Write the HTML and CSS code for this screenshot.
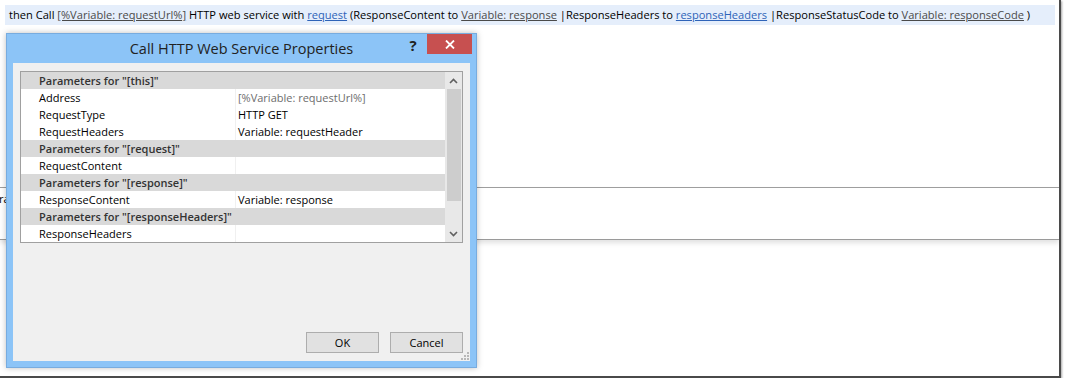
FILE: index.html
```html
<!DOCTYPE html>
<html lang="en">
<head>
    <meta charset="UTF-8">
    <title>Call HTTP Web Service Properties</title>
    <link rel="stylesheet" href="styles.css">
</head>
<body>

<div class="shot">
    <div class="editor">
        <div class="rule">then Call <a class="var">[%Variable: requestUrl%]</a> HTTP web service with <a class="lnk">request</a> (ResponseContent to <a class="var">Variable: response</a> |ResponseHeaders to <a class="lnk">responseHeaders</a> |ResponseStatusCode to <a class="var">Variable: responseCode</a> )</div>
        <div class="upper"></div>
        <div class="lower"><span class="cut">ra</span></div>
    </div>

    <div class="dialog">
        <div class="titlebar">
            <span class="title">Call HTTP Web Service Properties</span>
            <span class="help">?</span>
            <span class="close">
                <svg width="10" height="9" viewBox="0 0 10 9"><path d="M1 0.5 L9 8.5 M9 0.5 L1 8.5" stroke="#fff" stroke-width="1.8"/></svg>
            </span>
        </div>

        <div class="client">
            <div class="grid">
                <div class="rows">
                    <div class="cat">Parameters for "[this]"</div>
                    <div class="prop"><span class="name">Address</span><span class="val dim">[%Variable: requestUrl%]</span></div>
                    <div class="prop"><span class="name">RequestType</span><span class="val">HTTP GET</span></div>
                    <div class="prop"><span class="name">RequestHeaders</span><span class="val">Variable: requestHeader</span></div>
                    <div class="cat">Parameters for "[request]"</div>
                    <div class="prop"><span class="name">RequestContent</span><span class="val"></span></div>
                    <div class="cat">Parameters for "[response]"</div>
                    <div class="prop"><span class="name">ResponseContent</span><span class="val">Variable: response</span></div>
                    <div class="cat">Parameters for "[responseHeaders]"</div>
                    <div class="prop"><span class="name">ResponseHeaders</span><span class="val"></span></div>
                </div>
                <div class="scrollbar">
                    <div class="arrow">
                        <svg width="9" height="6" viewBox="0 0 9 6"><path d="M1 5 L4.5 1.5 L8 5" fill="none" stroke="#606060" stroke-width="1.6"/></svg>
                    </div>
                    <div class="thumb"></div>
                    <div class="track"></div>
                    <div class="arrow">
                        <svg width="9" height="6" viewBox="0 0 9 6"><path d="M1 1 L4.5 4.5 L8 1" fill="none" stroke="#606060" stroke-width="1.6"/></svg>
                    </div>
                </div>
            </div>

            <div class="buttons">
                <button>OK</button>
                <button>Cancel</button>
            </div>

            <svg class="grip" width="8" height="8" viewBox="0 0 8 8" fill="#b8b8b8">
                <rect x="6" y="0" width="2" height="2"/>
                <rect x="3" y="3" width="2" height="2"/>
                <rect x="6" y="3" width="2" height="2"/>
                <rect x="0" y="6" width="2" height="2"/>
                <rect x="3" y="6" width="2" height="2"/>
                <rect x="6" y="6" width="2" height="2"/>
            </svg>
        </div>
    </div>
</div>

</body>
</html>
```

FILE: styles.css
```css
body {
    margin: 0;
    background: #fff;
    font-family: "Open Sans", "Noto Sans", sans-serif;
    font-size: 11px;
    color: #000;
}
.shot {
    position: relative;
    width: 1059px;
    height: 376px;
    border-right: 2px solid #4a4a4a;
    border-bottom: 2px solid #4a4a4a;
    box-shadow: 1px 1px 2px rgba(0, 0, 0, 0.35);
    overflow: hidden;
}
.editor {
    padding-top: 5px;
}
.rule {
    margin: 0 4px 0 5px;
    height: 20px;
    line-height: 20px;
    padding-left: 4px;
    background: #e5eefb;
    white-space: nowrap;
    font-size: 11.1px;
}
.rule a {
    text-decoration: underline;
}
.var {
    color: #4a4a4a;
}
.lnk {
    color: #2e63b8;
}
.upper {
    height: 162px;
    border-bottom: 1px solid #a0a0a0;
}
.lower {
    height: 51px;
    border-bottom: 1px solid #9a9a9a;
    box-shadow: 0 3px 5px rgba(0, 0, 0, 0.12);
}
.cut {
    display: inline-block;
    margin-top: 3px;
    margin-left: -1px;
}

/* dialog window */
.dialog {
    position: absolute;
    left: 6px;
    top: 33px;
    width: 471px;
    height: 335px;
    box-sizing: border-box;
    background: #8cc4f7;
    border: 1px solid #78acdf;
    box-shadow: 0 0 6px rgba(0, 0, 0, 0.25);
    display: flex;
    flex-direction: column;
}
.titlebar {
    position: relative;
    height: 29px;
    line-height: 29px;
    text-align: center;
}
.title {
    font-size: 14.5px;
    color: #222;
}
.help {
    position: absolute;
    right: 55px;
    top: 0;
    width: 16px;
    line-height: 22px;
    font-size: 15px;
    font-weight: bold;
    color: #222;
}
.close {
    position: absolute;
    right: 4px;
    top: 0;
    width: 45px;
    height: 20px;
    background: #c75050;
    display: flex;
    align-items: center;
    justify-content: center;
}
.client {
    position: relative;
    flex: 1;
    margin: 0 6px 6px;
    background: #f0f0f0;
    padding: 8px 7px 8px;
    display: flex;
    flex-direction: column;
}

/* property grid */
.grid {
    display: flex;
    border: 1px solid #a0a0a0;
    background: #fff;
}
.rows {
    flex: 1;
}
.cat {
    height: 17px;
    line-height: 17px;
    padding-left: 18px;
    background: #d9d9d9;
    font-weight: 600;
    color: #333;
}
.prop {
    display: grid;
    grid-template-columns: 215px 1fr;
    height: 17px;
    line-height: 17px;
}
.name {
    padding-left: 18px;
    border-right: 1px solid #f0f0f0;
}
.val {
    padding-left: 2px;
}
.dim {
    color: #6d6d6d;
}
.scrollbar {
    width: 17px;
    background: #e8e8e8;
    display: flex;
    flex-direction: column;
}
.arrow {
    height: 17px;
    display: flex;
    align-items: center;
    justify-content: center;
}
.thumb {
    height: 112px;
    margin: 0 1px 0 2px;
    background: #cdcdcd;
}
.track {
    flex: 1;
}

.buttons {
    margin-top: auto;
    display: flex;
    justify-content: flex-end;
    gap: 11px;
}
button {
    width: 73px;
    height: 21px;
    padding: 0;
    border: 1px solid #adadad;
    background: #e1e1e1;
    font-family: "Open Sans", "Noto Sans", sans-serif;
    font-size: 11px;
    color: #000;
}
.grip {
    position: absolute;
    right: 1px;
    bottom: 1px;
}
```
